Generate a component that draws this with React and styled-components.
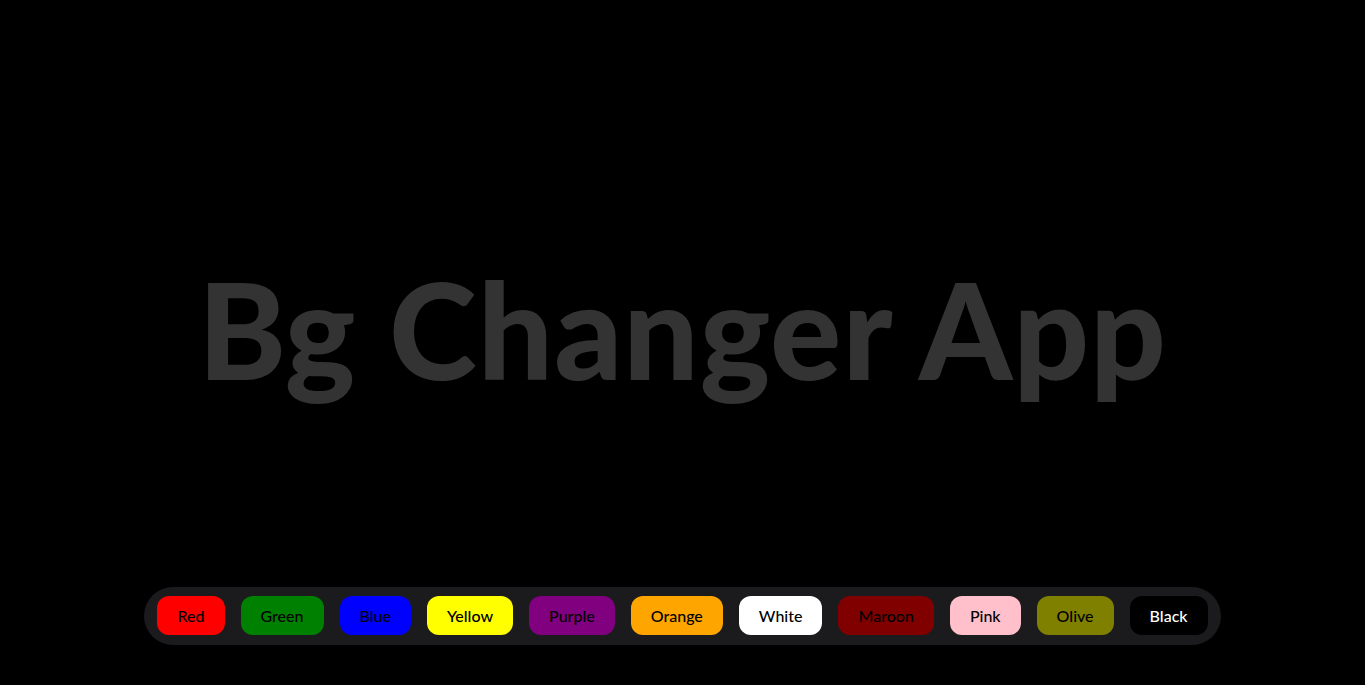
import React, { useState } from "react";
import styled, { createGlobalStyle } from "styled-components";

const Global = createGlobalStyle`
  html, body { margin: 0; padding: 0; }
  body { background: #000; font-family: Lato, "Noto Sans", sans-serif; }
  * { box-sizing: border-box; }
`;

const Page = styled.div`
  height: 100vh;
  display: grid;
  grid-template-rows: 1fr auto 1fr;
  justify-items: center;
  background: ${(p) => p.$bg};
  transition: background 0.2s;
`;

const Title = styled.h1`
  grid-row: 2;
  margin: 0 0 28px;
  font-family: Lato, "Noto Sans", sans-serif;
  font-weight: 900;
  font-size: 133px;
  line-height: 1;
  color: #333333;
  letter-spacing: 1px;
`;

const BarRow = styled.div`
  grid-row: 3;
  align-self: end;
  margin-bottom: 40px;
  display: flex;
  justify-content: center;
`;

const Bar = styled.div`
  display: flex;
  gap: 16px;
  padding: 9px 13px 10px;
  background: #1b1b1d;
  border-radius: 29px;
`;

const ColorButton = styled.button`
  height: 39px;
  padding: 0 20px;
  border: none;
  border-radius: 12px;
  background: ${(p) => p.$color};
  color: ${(p) => (p.$light ? "#fff" : "#000")};
  font-family: Lato, "Noto Sans", sans-serif;
  font-size: 16px;
  font-weight: 500;
  cursor: pointer;
`;

const colors = [
  ["Red", "red"],
  ["Green", "green"],
  ["Blue", "blue"],
  ["Yellow", "yellow"],
  ["Purple", "purple"],
  ["Orange", "orange"],
  ["White", "white"],
  ["Maroon", "maroon"],
  ["Pink", "pink"],
  ["Olive", "olive"],
  ["Black", "black"],
];

export default function App() {
  const [bg, setBg] = useState("#000");
  return (
    <>
      <Global />
      <Page $bg={bg}>
        <Title>Bg Changer App</Title>
        <BarRow>
          <Bar>
            {colors.map(([name, c]) => (
              <ColorButton
                key={name}
                $color={c}
                $light={c === "black"}
                onClick={() => setBg(c)}
              >
                {name}
              </ColorButton>
            ))}
          </Bar>
        </BarRow>
      </Page>
    </>
  );
}
